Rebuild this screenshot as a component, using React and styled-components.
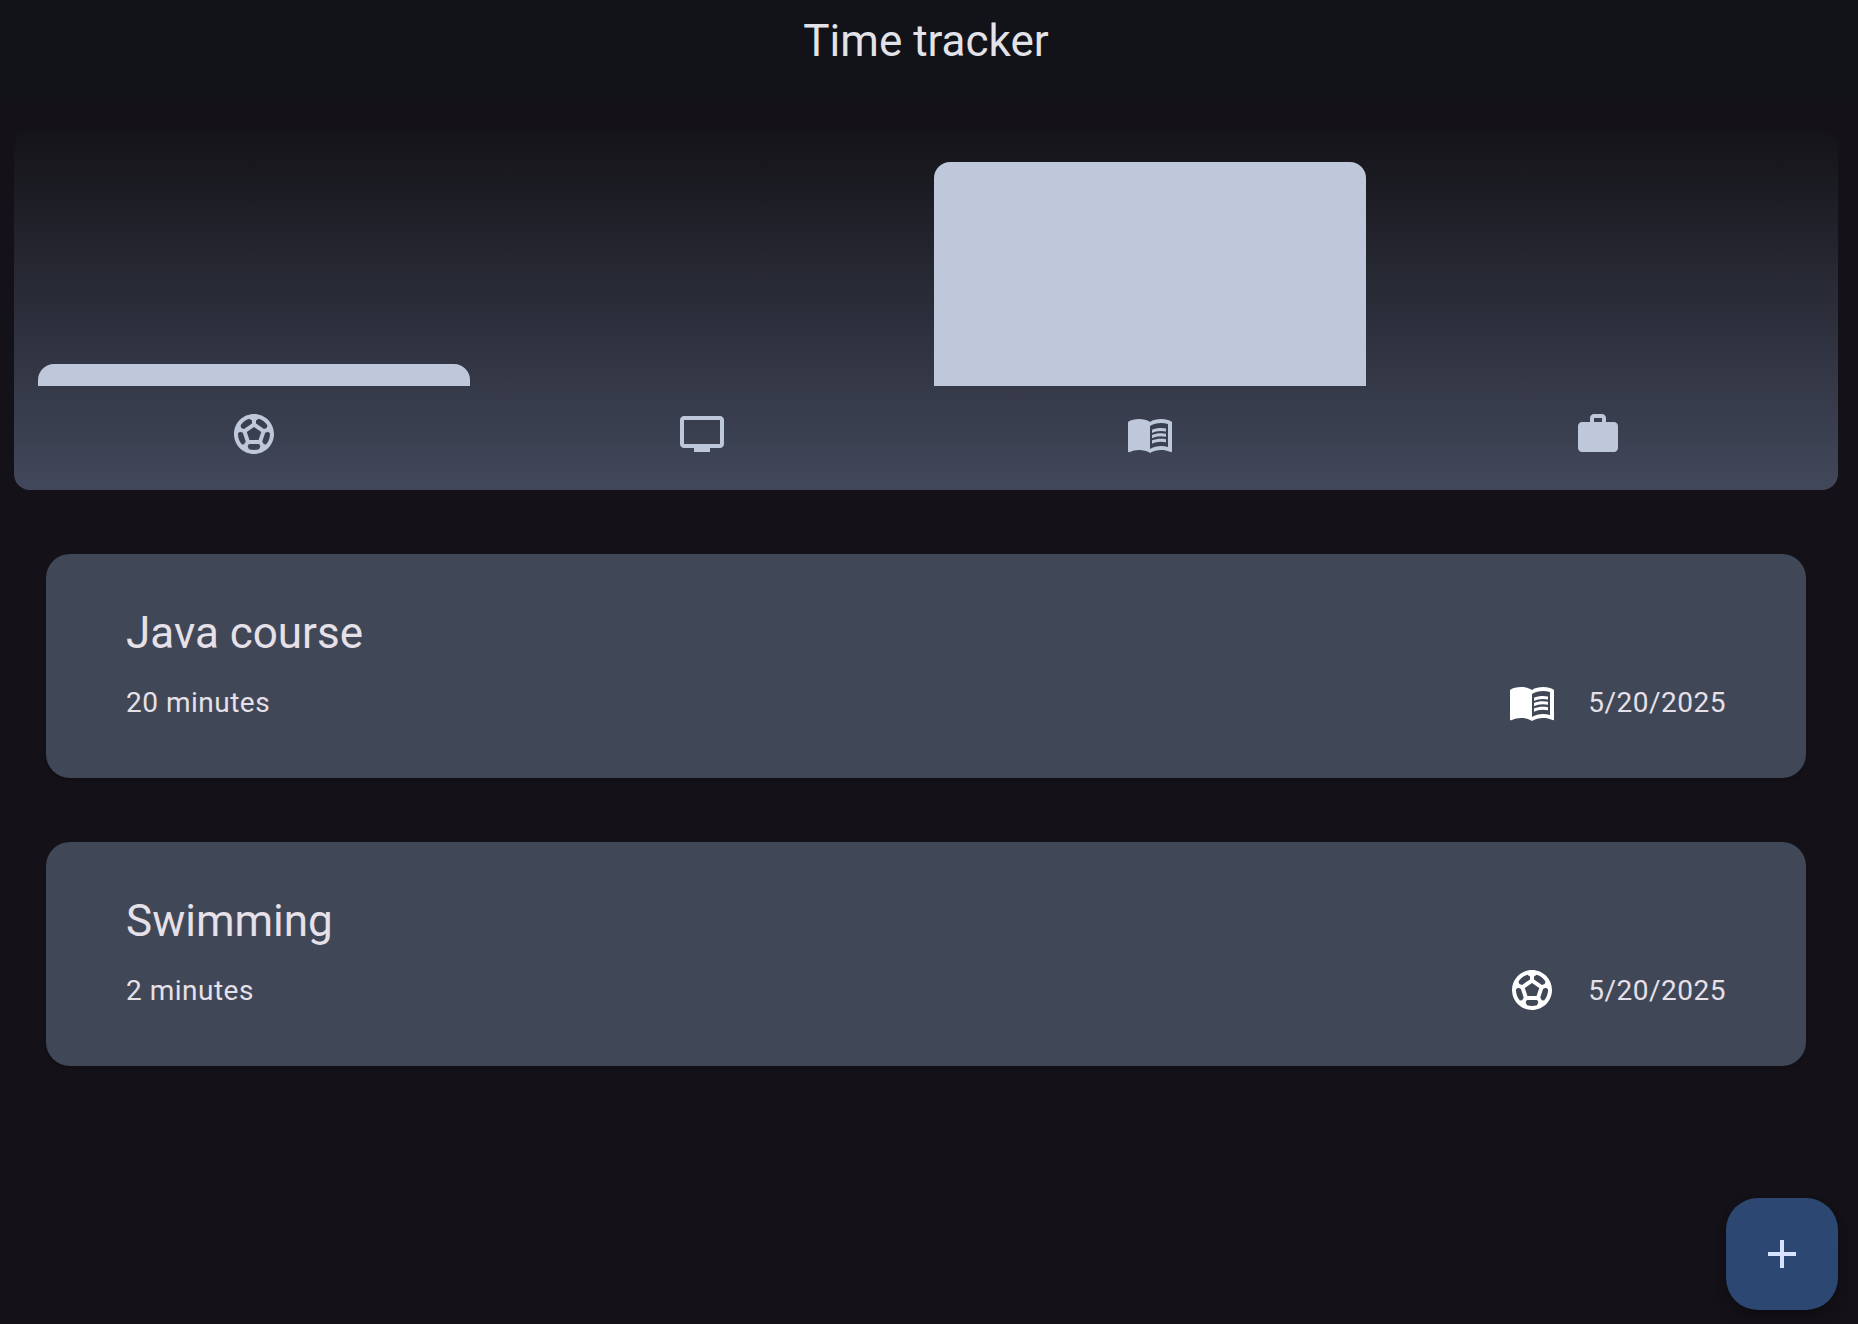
import React from "react";
import styled, { createGlobalStyle } from "styled-components";

const GlobalStyle = createGlobalStyle`
  *, *::before, *::after { box-sizing: border-box; }
  body { margin: 0; background: #141218; font-family: Roboto, "Liberation Sans", sans-serif; }
`;

const Page = styled.div`
  position: relative;
  width: 1858px;
  height: 1324px;
  overflow: hidden;
  background: #141218;
  color: #e6e0e9;
`;

const AppBar = styled.header`
  height: 98px;
  padding: 13px 6px 0 0;
  background: #111318;
  text-align: center;
`;

const AppTitle = styled.h1`
  margin: 0;
  font-size: 44px;
  line-height: 56px;
  font-weight: 400;
  color: #e2e2e9;
`;

const Content = styled.main`
  padding: 32px 20px 0 14px;
`;

const Chart = styled.section`
  display: flex;
  flex-direction: column;
  height: 360px;
  padding: 32px 16px;
  border-radius: 16px;
  background: linear-gradient(to bottom, #141318, #42485b);
`;

const Bars = styled.div`
  display: flex;
  align-items: flex-end;
  height: 224px;
`;

const Bar = styled.div`
  flex: 1;
  height: ${(p) => p.$fill * 100}%;
  margin: 0 8px;
  border-radius: 16px 16px 0 0;
  background: #bfc7db;
`;

const Legend = styled.div`
  display: flex;
  margin-top: 24px;
`;

const LegendItem = styled.div`
  flex: 1;
  display: flex;
  justify-content: center;
`;

const Icon = styled.svg`
  display: block;
  width: 48px;
  height: 48px;
  fill: ${(p) => p.$color};
`;

const List = styled.div`
  display: flex;
  flex-direction: column;
  gap: 64px;
  padding: 64px 32px 0;
`;

const Card = styled.article`
  height: 224px;
  padding: 49px 80px 0;
  border-radius: 24px;
  background: #404756;
  box-shadow: 0 2px 3px rgba(0, 0, 0, 0.18);
`;

const CardTitle = styled.h2`
  margin: 0;
  font-size: 44px;
  line-height: 60px;
  font-weight: 400;
`;

const CardRow = styled.div`
  display: flex;
  align-items: center;
  justify-content: space-between;
  margin-top: 15px;
  height: 48px;
`;

const Meta = styled.span`
  padding-top: 2px;
  font-size: 28px;
  line-height: 40px;
  letter-spacing: 0.5px;
`;

const CardAside = styled.div`
  display: flex;
  align-items: center;
  gap: 32px;
`;

const AddButton = styled.button`
  position: absolute;
  right: 20px;
  bottom: 14px;
  display: flex;
  align-items: center;
  justify-content: center;
  width: 112px;
  height: 112px;
  padding: 0;
  border: 0;
  border-radius: 32px;
  background: #2c4771;
  box-shadow: 0 5px 8px -1px rgba(0, 0, 0, 0.2), 0 8px 14px rgba(0, 0, 0, 0.14);
`;

const shapes = {
  sports: (
    <path d="M12 2C6.48 2 2 6.48 2 12s4.48 10 10 10 10-4.480 10-10S17.520 2 12 2zm1 3.300l1.350-.950c1.820.560 3.370 1.760 4.380 3.340l-.390 1.340-1.350.460L13 6.700V5.300zm-3.350-.950L11 5.300v1.400L7.010 9.490l-1.350-.460-.390-1.340c1.010-1.570 2.560-2.770 4.380-3.340zM7.080 17.110l-1.140.100C4.730 15.810 4 13.990 4 12c0-.120.010-.230.020-.350l1-.730 1.380.480 1.460 4.340-.780 1.370zm7.420 2.480c-.790.260-1.630.410-2.500.410s-1.710-.150-2.500-.410l-.690-1.490.640-1.100h5.110l.640 1.110-.700 1.480zM14.270 15H9.730l-1.350-4.020L12 8.440l3.630 2.540L14.270 15zm3.790 2.210l-1.140-.100-.790-1.370 1.460-4.340 1.390-.470 1 .730c.010.110.020.220.020.340 0 1.990-.730 3.810-1.940 5.210z" />
  ),
  tv: (
    <path d="M21 3H3c-1.100 0-2 .900-2 2v12c0 1.100.900 2 2 2h5v2h8v-2h5c1.100 0 1.990-.900 1.990-2L23 5c0-1.100-.900-2-2-2zm0 14H3V5h18v12z" />
  ),
  book: (
    <>
      <path d="M21 5c-1.110-.350-2.330-.500-3.500-.500-1.950 0-4.050.400-5.500 1.500-1.450-1.100-3.550-1.500-5.500-1.500S2.450 4.900 1 6v14.650c0 .250.250.500.500.500.100 0 .150-.050.250-.050C3.100 20.450 5.050 20 6.500 20c1.950 0 4.050.400 5.500 1.500 1.350-.850 3.800-1.500 5.500-1.500 1.650 0 3.350.300 4.750 1.050.100.050.150.050.250.050.250 0 .500-.250.500-.500V6c-.600-.450-1.250-.750-2-1zm0 13.500c-1.100-.350-2.300-.500-3.500-.500-1.700 0-4.150.650-5.500 1.500V8c1.350-.850 3.800-1.500 5.500-1.500 1.200 0 2.400.150 3.500.500v11.500z" />
      <path d="M17.500 10.500c.880 0 1.730.090 2.500.260V9.240c-.790-.150-1.640-.240-2.500-.240-1.700 0-3.240.290-4.500.830v1.660c1.130-.640 2.700-.990 4.500-.990zM13 12.490v1.660c1.130-.640 2.700-.990 4.500-.990.880 0 1.730.090 2.500.260V11.900c-.790-.150-1.640-.240-2.500-.240-1.700 0-3.240.300-4.500.830zM17.500 14.330c-1.700 0-3.240.290-4.500.830v1.660c1.130-.640 2.700-.990 4.500-.990.880 0 1.730.090 2.500.260v-1.520c-.790-.160-1.640-.240-2.500-.240z" />
    </>
  ),
  work: (
    <path d="M20 6h-4V4c0-1.110-.890-2-2-2h-4c-1.110 0-2 .890-2 2v2H4c-1.110 0-1.990.890-1.990 2L2 19c0 1.110.890 2 2 2h16c1.110 0 2-.890 2-2V8c0-1.110-.890-2-2-2zm-6 0h-4V4h4v2z" />
  ),
  add: <path d="M19 13h-6v6h-2v-6H5v-2h6V5h2v6h6v2z" />,
};

function MaterialIcon({ name, color }) {
  return (
    <Icon viewBox="0 0 24 24" $color={color} aria-hidden="true">
      {shapes[name]}
    </Icon>
  );
}

const categories = [
  { name: "sports", fill: 0.1 },
  { name: "tv", fill: 0 },
  { name: "book", fill: 1 },
  { name: "work", fill: 0 },
];

const activities = [
  { title: "Java course", duration: "20 minutes", icon: "book", date: "5/20/2025" },
  { title: "Swimming", duration: "2 minutes", icon: "sports", date: "5/20/2025" },
];

export default function App() {
  return (
    <Page>
      <GlobalStyle />
      <AppBar>
        <AppTitle>Time tracker</AppTitle>
      </AppBar>
      <Content>
        <Chart>
          <Bars>
            {categories.map((c) => (
              <Bar key={c.name} $fill={c.fill} />
            ))}
          </Bars>
          <Legend>
            {categories.map((c) => (
              <LegendItem key={c.name}>
                <MaterialIcon name={c.name} color="#bfc7db" />
              </LegendItem>
            ))}
          </Legend>
        </Chart>
        <List>
          {activities.map((a) => (
            <Card key={a.title}>
              <CardTitle>{a.title}</CardTitle>
              <CardRow>
                <Meta>{a.duration}</Meta>
                <CardAside>
                  <MaterialIcon name={a.icon} color="#fff" />
                  <Meta>{a.date}</Meta>
                </CardAside>
              </CardRow>
            </Card>
          ))}
        </List>
      </Content>
      <AddButton aria-label="Add activity">
        <MaterialIcon name="add" color="#d7e2ff" />
      </AddButton>
    </Page>
  );
}
